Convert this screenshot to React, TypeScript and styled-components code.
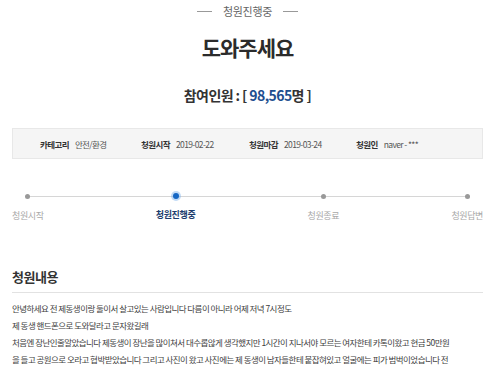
import styled, { createGlobalStyle } from 'styled-components';

const GlobalStyle = createGlobalStyle`
  html, body {
    margin: 0;
    padding: 0;
    background: #ffffff;
  }
  body {
    font-family: 'Noto Sans CJK KR', 'Noto Sans', sans-serif;
    color: #333;
  }
`;

const Page = styled.div`
  width: 500px;
  height: 367px;
  overflow: hidden;
  padding: 0 17px 0 12px;
  box-sizing: border-box;
`;

const Status = styled.div`
  display: flex;
  align-items: center;
  justify-content: center;
  gap: 11px;
  padding-top: 3px;
  font-size: 11px;
  line-height: 16px;
  color: #666;
  letter-spacing: -0.3px;

  &::before,
  &::after {
    content: '';
    width: 15px;
    height: 1px;
    background: #999;
  }
`;

const Title = styled.h1`
  margin: 14px 0 0;
  text-align: center;
  font-size: 21px;
  line-height: 28px;
  font-weight: 700;
  letter-spacing: -1px;
  color: #2b2b2b;
`;

const Count = styled.div`
  margin-top: 24px;
  text-align: center;
  font-size: 14px;
  line-height: 20px;
  font-weight: 700;
  letter-spacing: -0.6px;
  color: #333;

  strong {
    color: #1d4e8f;
    font-weight: 700;
  }
`;

const InfoBox = styled.div`
  margin-top: 23px;
  height: 31px;
  display: flex;
  align-items: center;
  padding-left: 27px;
  background: #f5f5f5;
  border: 1px solid #e8e8e8;
  box-sizing: border-box;
  font-size: 8.5px;
  letter-spacing: -0.6px;
`;

const InfoItem = styled.div<{ $w: number }>`
  width: ${(p) => p.$w}px;
  display: flex;
  gap: 6px;
  color: #555;

  b {
    color: #333;
    font-weight: 700;
  }
`;

const Timeline = styled.div`
  position: relative;
  margin-top: 32px;
  display: flex;
  justify-content: space-between;

  &::before {
    content: '';
    position: absolute;
    top: 5px;
    left: 16px;
    right: 16px;
    height: 1px;
    background: #d6d6d6;
  }
`;

const Step = styled.div`
  display: flex;
  flex-direction: column;
  align-items: center;
  gap: 8px;
  position: relative;
`;

const Dot = styled.span<{ $active?: boolean }>`
  width: ${(p) => (p.$active ? 6 : 5)}px;
  height: ${(p) => (p.$active ? 6 : 5)}px;
  margin: ${(p) => (p.$active ? '2px 0' : '3px 0')};
  border-radius: 50%;
  background: ${(p) => (p.$active ? '#1567c4' : '#999')};
  box-shadow: ${(p) => (p.$active ? '0 0 0 2px rgba(120, 175, 235, 0.45)' : 'none')};
`;

const StepLabel = styled.span<{ $active?: boolean }>`
  font-size: 9px;
  line-height: 12px;
  letter-spacing: -0.4px;
  font-weight: ${(p) => (p.$active ? 700 : 400)};
  color: ${(p) => (p.$active ? '#1c3d6e' : '#a8a8a8')};
`;

const SectionTitle = styled.h2`
  margin: 46px 0 0;
  padding-bottom: 6px;
  border-bottom: 1px solid #e2e2e2;
  font-size: 13px;
  line-height: 18px;
  font-weight: 700;
  letter-spacing: -0.5px;
  color: #333;
`;

const Body = styled.div`
  margin-top: 7px;
  font-size: 8.5px;
  line-height: 17px;
  letter-spacing: -0.55px;
  color: #404040;
`;

const Line = styled.div`
  white-space: nowrap;
  overflow: hidden;
`;

const steps = [
  { label: '청원시작' },
  { label: '청원진행중', active: true },
  { label: '청원종료' },
  { label: '청원답변' },
];

const lines = [
  '안녕하세요 전 제동생이랑 둘이서 살고있는 사람입니다 다름이 아니라 어제 저녁 7시정도',
  '제 동생 핸드폰으로 도와달라고 문자왔길래',
  '처음엔 장난인줄알았습니다 제동생이 장난을 많이쳐서 대수롭않게 생각했지만 1시간이 지나서야 모르는 여자한테 카톡이왔고 현금 50만원',
  '을 들고 공원으로 오라고 협박받았습니다 그리고 사진이 왔고 사진에는 제 동생이 남자들한테 붙잡혀있고 얼굴에는 피가 범벅이었습니다 전',
];

export default function App() {
  return (
    <>
      <GlobalStyle />
      <Page>
        <Status>청원진행중</Status>
        <Title>도와주세요</Title>
        <Count>
          참여인원 : [ <strong>98,565</strong>명 ]
        </Count>
        <InfoBox>
          <InfoItem $w={101}>
            <b>카테고리</b>
            <span>안전/환경</span>
          </InfoItem>
          <InfoItem $w={108}>
            <b>청원시작</b>
            <span>2019-02-22</span>
          </InfoItem>
          <InfoItem $w={107}>
            <b>청원마감</b>
            <span>2019-03-24</span>
          </InfoItem>
          <InfoItem $w={90}>
            <b>청원인</b>
            <span>naver - ***</span>
          </InfoItem>
        </InfoBox>
        <Timeline>
          {steps.map((s) => (
            <Step key={s.label}>
              <Dot $active={s.active} />
              <StepLabel $active={s.active}>{s.label}</StepLabel>
            </Step>
          ))}
        </Timeline>
        <SectionTitle>청원내용</SectionTitle>
        <Body>
          {lines.map((l) => (
            <Line key={l}>{l}</Line>
          ))}
        </Body>
      </Page>
    </>
  );
}
